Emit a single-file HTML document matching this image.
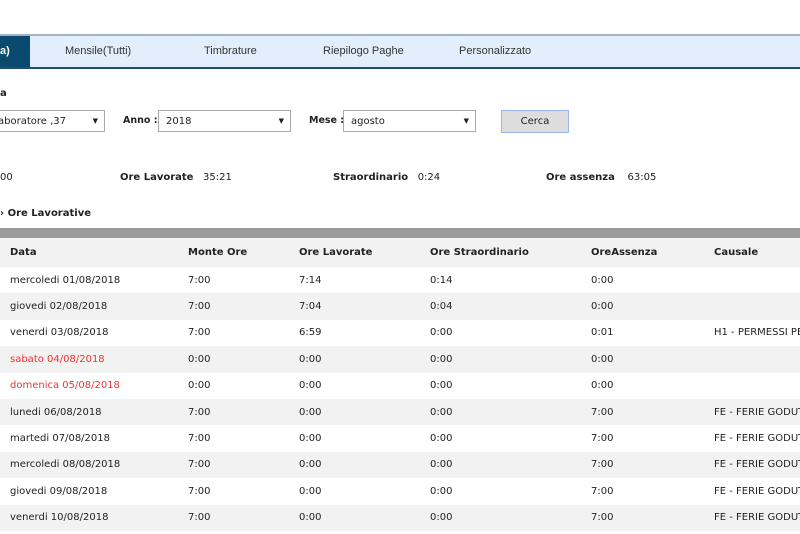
<!DOCTYPE html><html><head><style>
body{margin:0;width:800px;height:534px;overflow:hidden;background:#fff;font-family:"DejaVu Sans",Verdana,sans-serif;font-size:10px;color:#222;position:relative}
.a{position:absolute;white-space:nowrap}
.tabs{position:absolute;left:0;top:34px;width:800px;height:31px;background:#e3eefc;border-top:2px solid #9fb3c4;border-bottom:2px solid #1e4f6e}
.tab{position:absolute;top:9px;font-family:"Liberation Sans",Arial,sans-serif;font-size:11px;color:#333}
.act{position:absolute;left:0;top:0;width:30px;height:31px;background:#0b4a6f;color:#fff;font-weight:bold;font-family:"Liberation Sans",sans-serif;font-size:11px;line-height:31px}
.sel{position:absolute;height:22px;border:1px solid #aaa;background:#fff;box-sizing:border-box;font-size:10px;line-height:21px;padding-left:7px}
.sel:after{content:"▼";position:absolute;right:6px;top:0;font-size:7px}
b{font-weight:bold}
table{position:absolute;left:0;top:238px;width:800px;border-collapse:collapse;table-layout:fixed;border-top:10px solid #9b9b9b;margin-top:-10px}
td{height:26.4px;padding:0;padding-left:10px;font-size:10px;white-space:nowrap;overflow:hidden;padding-top:0}
tr:nth-child(odd){background:#f2f2f2}
th{height:27px;text-align:left;padding-left:10px;font-size:10px;background:#f2f2f2}
.r{color:#e33}
</style></head><body>
<div class="tabs">
<div class="act">a)</div>
<div class="tab" style="left:65px">Mensile(Tutti)</div>
<div class="tab" style="left:204px">Timbrature</div>
<div class="tab" style="left:323px">Riepilogo Paghe</div>
<div class="tab" style="left:459px">Personalizzato</div>
</div>
<div class="a" style="left:0;top:88px"><b>a</b></div>
<div class="sel" style="left:-10px;top:110px;width:115px">aboratore ,37</div>
<div class="a" style="left:123px;top:115px;font-size:9.5px"><b>Anno :</b></div>
<div class="sel" style="left:158px;top:110px;width:133px">2018</div>
<div class="a" style="left:309px;top:115px;font-size:9.5px"><b>Mese :</b></div>
<div class="sel" style="left:343px;top:110px;width:133px">agosto</div>
<div class="a" style="left:501px;top:110px;width:68px;height:23px;background:#ddd;border:1px solid #9bb5f0;box-sizing:border-box;text-align:center;line-height:21px">Cerca</div>
<div class="a" style="left:0;top:172px">00</div>
<div class="a" style="left:120px;top:172px"><b>Ore Lavorate</b>&nbsp;&nbsp; 35:21</div>
<div class="a" style="left:333px;top:172px"><b>Straordinario</b>&nbsp;&nbsp; 0:24</div>
<div class="a" style="left:546px;top:172px"><b>Ore assenza</b>&nbsp;&nbsp;&nbsp; 63:05</div>
<div class="a" style="left:0;top:208px"><b>› Ore Lavorative</b></div>
<table>
<colgroup><col style="width:178px"><col style="width:111px"><col style="width:131px"><col style="width:161px"><col style="width:123px"><col></colgroup>
<tr><th>Data</th><th>Monte Ore</th><th>Ore Lavorate</th><th>Ore Straordinario</th><th>OreAssenza</th><th>Causale</th></tr>
<tr><td>mercoledi 01/08/2018</td><td>7:00</td><td>7:14</td><td>0:14</td><td>0:00</td><td></td></tr>
<tr><td>giovedi 02/08/2018</td><td>7:00</td><td>7:04</td><td>0:04</td><td>0:00</td><td></td></tr>
<tr><td>venerdi 03/08/2018</td><td>7:00</td><td>6:59</td><td>0:00</td><td>0:01</td><td>H1 - PERMESSI PEN</td></tr>
<tr><td class="r">sabato 04/08/2018</td><td>0:00</td><td>0:00</td><td>0:00</td><td>0:00</td><td></td></tr>
<tr><td class="r">domenica 05/08/2018</td><td>0:00</td><td>0:00</td><td>0:00</td><td>0:00</td><td></td></tr>
<tr><td>lunedi 06/08/2018</td><td>7:00</td><td>0:00</td><td>0:00</td><td>7:00</td><td>FE - FERIE GODUTE</td></tr>
<tr><td>martedi 07/08/2018</td><td>7:00</td><td>0:00</td><td>0:00</td><td>7:00</td><td>FE - FERIE GODUTE</td></tr>
<tr><td>mercoledi 08/08/2018</td><td>7:00</td><td>0:00</td><td>0:00</td><td>7:00</td><td>FE - FERIE GODUTE</td></tr>
<tr><td>giovedi 09/08/2018</td><td>7:00</td><td>0:00</td><td>0:00</td><td>7:00</td><td>FE - FERIE GODUTE</td></tr>
<tr><td>venerdi 10/08/2018</td><td>7:00</td><td>0:00</td><td>0:00</td><td>7:00</td><td>FE - FERIE GODUTE</td></tr>
</table>
</body></html>
